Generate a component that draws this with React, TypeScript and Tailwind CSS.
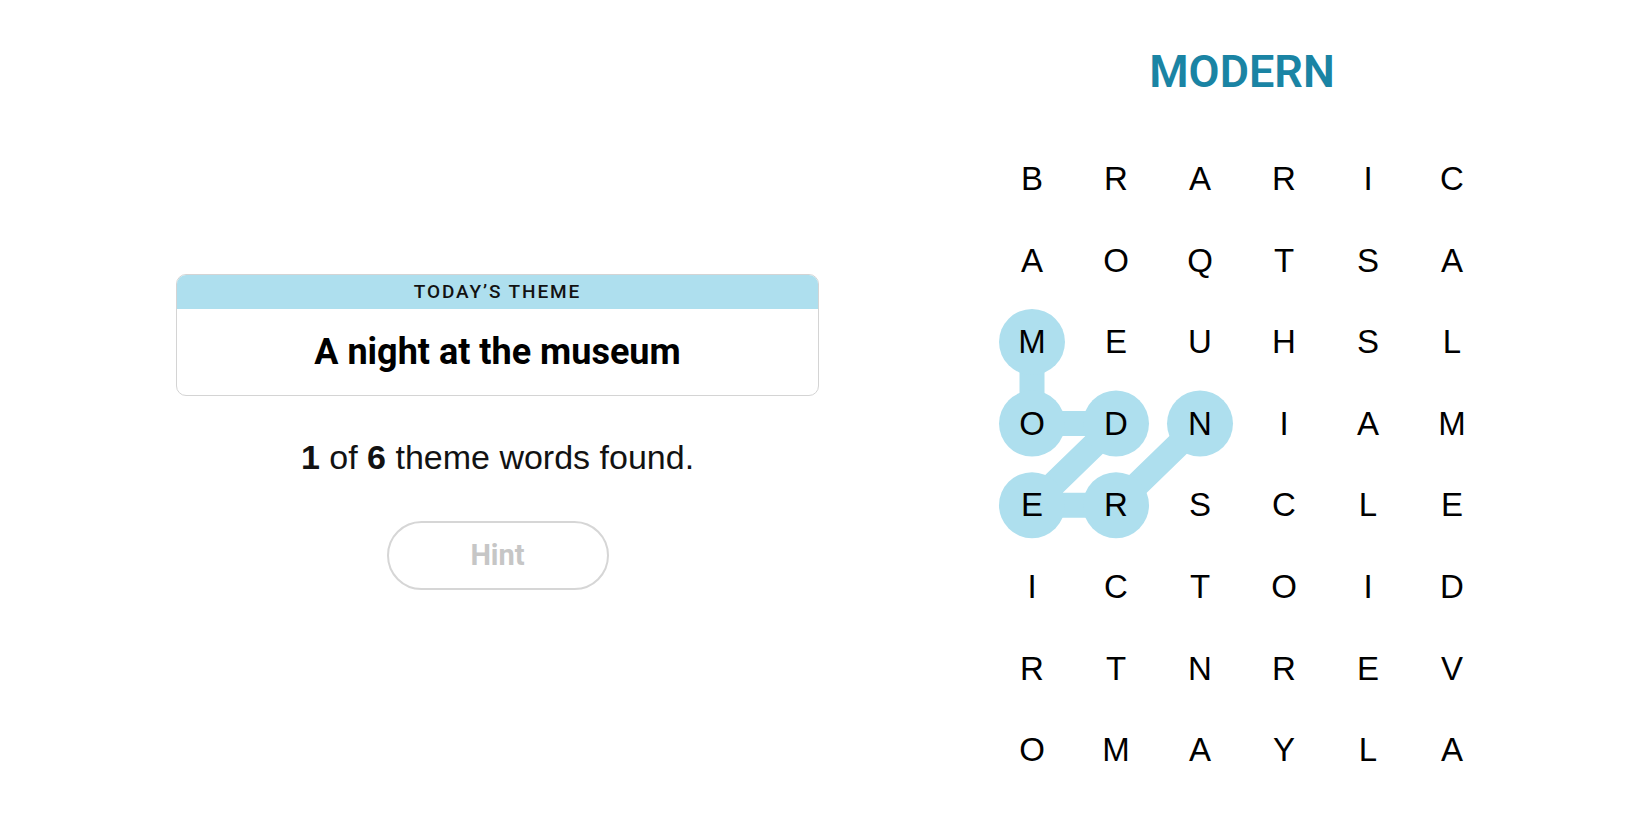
import React from "react";

const GRID = [
  ["B", "R", "A", "R", "I", "C"],
  ["A", "O", "Q", "T", "S", "A"],
  ["M", "E", "U", "H", "S", "L"],
  ["O", "D", "N", "I", "A", "M"],
  ["E", "R", "S", "C", "L", "E"],
  ["I", "C", "T", "O", "I", "D"],
  ["R", "T", "N", "R", "E", "V"],
  ["O", "M", "A", "Y", "L", "A"],
];

// found word path: M O D E R N  as [col, row]
const FOUND: [number, number][] = [
  [0, 2],
  [0, 3],
  [1, 3],
  [0, 4],
  [1, 4],
  [2, 3],
];

const COL_W = 84;
const ROW_H = 81.6;

const cx = (c: number) => COL_W / 2 + c * COL_W;
const cy = (r: number) => ROW_H / 2 + r * ROW_H;

function ThemeCard() {
  return (
    <div className="w-[643px] overflow-hidden rounded-[10px] border border-[#d4d4d4] bg-white">
      <div className="flex h-[34px] items-center justify-center bg-[#aedfee]">
        <span className="font-['Roboto',sans-serif] text-[19px] font-medium uppercase tracking-[0.1em] text-[#121212]">
          Today’s Theme
        </span>
      </div>
      <div className="flex h-[86px] items-center justify-center">
        <span className="font-['Roboto',sans-serif] text-[36px] font-bold text-black">
          A night at the museum
        </span>
      </div>
    </div>
  );
}

function Board() {
  const pts = FOUND.map(([c, r]) => `${cx(c)},${cy(r)}`).join(" ");
  return (
    <div className="relative grid w-[504px] grid-cols-6">
      <svg
        className="absolute inset-0"
        width={504}
        height={ROW_H * 8}
        viewBox={`0 0 504 ${ROW_H * 8}`}
      >
        <polyline
          points={pts}
          fill="none"
          stroke="#aedfee"
          strokeWidth={25}
          strokeLinejoin="round"
          strokeLinecap="round"
        />
        {FOUND.map(([c, r], i) => (
          <circle key={i} cx={cx(c)} cy={cy(r)} r={33} fill="#aedfee" />
        ))}
      </svg>
      {GRID.flat().map((ch, i) => (
        <div
          key={i}
          className="relative flex h-[81.6px] items-center justify-center font-['Liberation_Sans',Arial,sans-serif] text-[33px] text-black"
        >
          {ch}
        </div>
      ))}
    </div>
  );
}

export default function App() {
  return (
    <div className="flex h-[825px] w-[1650px] gap-[171px] bg-white pl-[176px]">
      <div className="mt-[274px] flex flex-col items-center">
        <ThemeCard />
        <p className="mt-[41px] font-['Liberation_Sans',Arial,sans-serif] text-[34px] leading-[40px] text-[#121212]">
          <b>1</b> of <b>6</b> theme words found.
        </p>
        <button className="mt-[44px] flex h-[69px] w-[222px] items-center justify-center rounded-full border-2 border-[#d6d6d6] bg-white font-['Roboto',sans-serif] text-[29px] font-bold text-[#c6c6c6]">
          Hint
        </button>
      </div>
      <div className="flex flex-col items-center">
        <h1 className="mt-[47px] font-['Roboto',sans-serif] text-[45px] font-semibold leading-[50px] text-[#1a84a4]">
          MODERN
        </h1>
        <div className="mt-[41px]">
          <Board />
        </div>
      </div>
    </div>
  );
}
